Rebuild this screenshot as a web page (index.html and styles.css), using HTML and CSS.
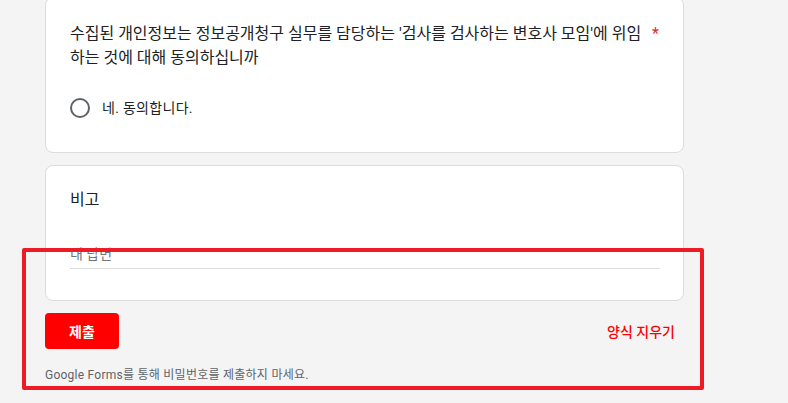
FILE: index.html
```html
<!DOCTYPE html>
<html lang="ko">
<head>
<meta charset="utf-8">
<title>Form</title>
<link rel="stylesheet" href="styles.css">
</head>
<body>
<div class="page">
  <div class="card card-question">
    <div class="q-head">
      <div class="q-text">수집된 개인정보는 정보공개청구 실무를 담당하는 '검사를 검사하는 변호사 모임'에 위임하는 것에 대해 동의하십니까</div>
      <span class="req">*</span>
    </div>
    <label class="option">
      <span class="radio"></span>
      <span class="option-text">네. 동의합니다.</span>
    </label>
  </div>

  <div class="card card-note">
    <div class="note-title">비고</div>
    <div class="answer">
      <span class="placeholder">내 답변</span>
    </div>
  </div>

  <div class="actions">
    <button class="submit" type="button">제출</button>
    <button class="clear" type="button">양식 지우기</button>
  </div>
  <p class="footnote">Google Forms를 통해 비밀번호를 제출하지 마세요.</p>
</div>
<div class="highlight"></div>
</body>
</html>
```

FILE: styles.css
```css
html, body {
  margin: 0;
  padding: 0;
  background: #f4f4f4;
}
body {
  font-family: Roboto, "Noto Sans CJK KR", "Noto Sans", sans-serif;
  color: #202124;
  height: 403px;
  overflow: hidden;
  position: relative;
}
.page {
  width: 639px;
  margin-left: 45px;
  margin-top: -3px;
}
.card {
  background: #fff;
  border: 1px solid #dadce0;
  border-radius: 8px;
  padding: 24px;
  margin-bottom: 12px;
  box-sizing: border-box;
}
.q-head {
  display: flex;
  align-items: flex-start;
}
.q-text {
  flex: 1;
  font-size: 16px;
  line-height: 24px;
  letter-spacing: 0;
  padding-right: 10px;
}
.req {
  flex: none;
  color: #d93025;
  font-size: 16px;
  line-height: 24px;
}
.option {
  display: flex;
  align-items: center;
  height: 40px;
  margin-top: 18px;
}
.radio {
  width: 20px;
  height: 20px;
  box-sizing: border-box;
  border: 2px solid #5f6368;
  border-radius: 50%;
  margin-left: 0;
  margin-right: 12px;
}
.option-text {
  font-size: 14px;
  line-height: 20px;
  letter-spacing: 0.3px;
  color: #202124;
}
.card-note {
  padding-top: 22px;
  padding-bottom: 31px;
}
.note-title {
  font-size: 16px;
  line-height: 24px;
}
.answer {
  margin-top: 32px;
  width: 590px;
  border-bottom: 1px solid #dadce0;
  padding-bottom: 4px;
}
.placeholder {
  display: block;
  font-size: 14px;
  line-height: 20px;
  color: #70757a;
}
.actions {
  display: flex;
  justify-content: space-between;
  align-items: center;
  margin-top: 12px;
}
.submit {
  width: 74px;
  height: 36px;
  border: 0;
  border-radius: 4px;
  background: #ff0000;
  color: #fff;
  font-family: inherit;
  font-size: 14px;
  font-weight: 700;
  padding: 0;
}
.clear {
  background: none;
  border: 0;
  color: #ff0000;
  font-family: inherit;
  font-size: 14px;
  font-weight: 500;
  padding: 0 9px 0 0;
}
.footnote {
  margin: 18px 0 0;
  font-size: 12px;
  line-height: 16px;
  letter-spacing: 0.25px;
  color: #5f6368;
}
.highlight {
  position: absolute;
  left: 22px;
  top: 248px;
  width: 682px;
  height: 142px;
  box-sizing: border-box;
  border: 4px solid #ed1c24;
  border-radius: 2px;
  pointer-events: none;
}
```
